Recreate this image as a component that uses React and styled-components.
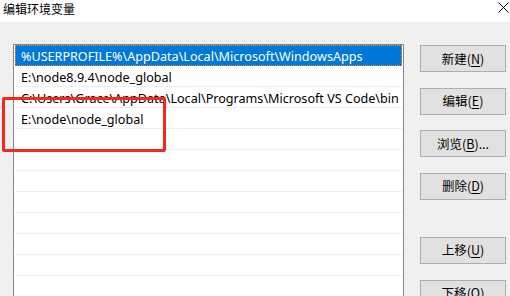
import React from "react";
import styled, { createGlobalStyle } from "styled-components";

const Global = createGlobalStyle`
  html, body { margin: 0; padding: 0; }
  body {
    width: 510px;
    height: 296px;
    overflow: hidden;
    background: #f0f0f0;
    font-family: "Noto Sans", "Noto Sans CJK SC", sans-serif;
    font-size: 12px;
    color: #000;
  }
`;

const Window = styled.div`
  position: relative;
  width: 510px;
  height: 296px;
  overflow: hidden;
  background: #f0f0f0;
`;

const TitleBar = styled.div`
  height: 22px;
  background: #fff;
  display: flex;
  align-items: flex-start;
  justify-content: space-between;
  box-sizing: border-box;
  padding: 0 1px 0 3px;
`;

const Title = styled.div`
  font-family: "Noto Sans CJK SC", sans-serif;
  font-size: 12px;
  line-height: 16px;
  margin-top: 1px;
`;

const Close = styled.svg`
  width: 11px;
  height: 11px;
  margin-top: 2px;
`;

const Body = styled.div`
  display: flex;
  align-items: flex-start;
  gap: 16px;
  padding: 22px 0 0 13px;
`;

const List = styled.div`
  width: 391px;
  height: 300px;
  box-sizing: border-box;
  border: 1px solid #828790;
  border-bottom: none;
  background: #fff;
  padding: 0 1px;
`;

const Row = styled.div`
  height: 21px;
  box-sizing: border-box;
  border-bottom: 1px solid #efefef;
  display: flex;
  align-items: center;
  padding-left: 6px;
  white-space: nowrap;
  overflow: hidden;
  ${(p) =>
    p.$selected &&
    `
    background: #0078d7;
    color: #fff;
    border: 1px dotted #f7941d;
    padding-left: 5px;
  `}
`;

const RowText = styled.span`
  font-family: "Noto Sans", sans-serif;
  font-size: 12.6px;
  line-height: 16px;
  padding-top: 3px;
`;

const Buttons = styled.div`
  display: flex;
  flex-direction: column;
  gap: 15.67px;
  padding-top: 1px;
`;

const Button = styled.button`
  width: 86px;
  height: 27px;
  box-sizing: border-box;
  border: 1px solid #adadad;
  background: #e1e1e1;
  font-family: "Noto Sans CJK SC", sans-serif;
  font-size: 12.5px;
  color: #000;
  padding: 0;
  margin: 0;
  margin-top: ${(p) => p.$extra || 0}px;
  display: flex;
  align-items: center;
  justify-content: center;
  line-height: 16px;
`;

const Key = styled.span`
  text-decoration: underline;
  text-underline-offset: 2px;
`;

const Mark = styled.div`
  position: absolute;
  left: 2px;
  top: 97px;
  width: 164px;
  height: 55px;
  box-sizing: border-box;
  border: 3px solid #f5281c;
  border-radius: 2px;
`;

const rows = [
  "%USERPROFILE%\\AppData\\Local\\Microsoft\\WindowsApps",
  "E:\\node8.9.4\\node_global",
  "C:\\Users\\Grace\\AppData\\Local\\Programs\\Microsoft VS Code\\bin",
  "E:\\node\\node_global",
  "", "", "", "", "", "", "", "", "",
];

const buttons = [
  { label: "新建", key: "N" },
  { label: "编辑", key: "E" },
  { label: "浏览", key: "B", tail: "..." },
  { label: "删除", key: "D" },
  { label: "上移", key: "U", extra: 21.33 },
  { label: "下移", key: "O" },
];

export default function App() {
  return (
    <Window>
      <Global />
      <TitleBar>
        <Title>编辑环境变量</Title>
        <Close viewBox="0 0 11 11">
          <path d="M0.5 0.5 L10.5 10.5 M10.5 0.5 L0.5 10.5" stroke="#000" strokeWidth="1" />
        </Close>
      </TitleBar>
      <Body>
        <List>
          {rows.map((r, i) => (
            <Row key={i} $selected={i === 0}>
              <RowText>{r}</RowText>
            </Row>
          ))}
        </List>
        <Buttons>
          {buttons.map((b) => (
            <Button key={b.key} $extra={b.extra}>
              {b.label}(<Key>{b.key}</Key>){b.tail || ""}
            </Button>
          ))}
        </Buttons>
      </Body>
      <Mark />
    </Window>
  );
}
